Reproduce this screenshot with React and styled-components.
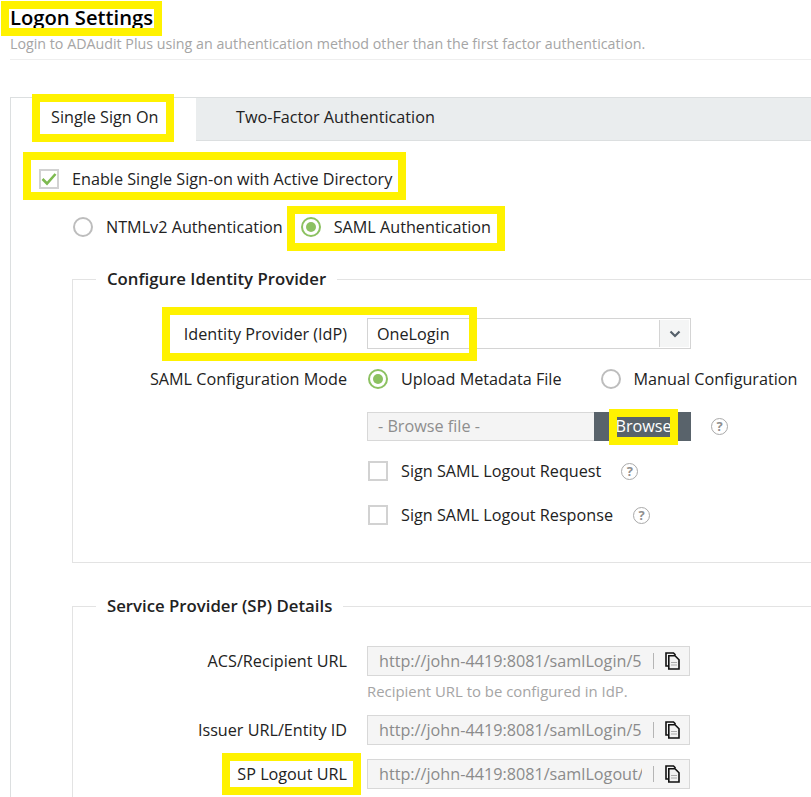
import React from 'react';
import styled, { createGlobalStyle } from 'styled-components';

const GlobalStyle = createGlobalStyle`
  html, body {
    margin: 0;
    padding: 0;
    background: #fff;
  }
  body {
    font-family: "Open Sans", "Liberation Sans", sans-serif;
    font-size: 16.2px;
    color: #222;
  }
`;

const Page = styled.div`
  width: 811px;
  height: 797px;
  overflow: hidden;
  padding: 9px 0 0 10px;
  box-sizing: border-box;
`;

// the yellow annotation frames sit around the content without taking up room
const Marked = styled.span`
  display: inline-flex;
  align-items: center;
  outline: 8px solid #fff200;
  background: ${(p) => p.$bg || 'transparent'};
`;

const Title = styled.h1`
  display: flex;
  margin: 0;
  font-size: 20.2px;
  font-weight: 600;
  line-height: 19px;
  color: #000;
`;

const TitleMark = styled(Marked)`
  width: 145px;
  height: 19px;
  align-items: flex-start;
  margin-left: -1px;
  padding-left: 1px;
  box-sizing: border-box;
  line-height: 16px;
`;

const Subtitle = styled.p`
  margin: 6px 0 0;
  padding-bottom: 5px;
  font-size: 14.25px;
  line-height: 20px;
  color: #a5a5a5;
  border-bottom: 1px solid #eee;
`;

const Panel = styled.div`
  margin-top: 37px;
  border-top: 1px solid #dcdfe0;
  border-left: 1px solid #dcdfe0;
  height: 700px;
`;

const TabBar = styled.div`
  display: flex;
  height: 42px;
  background: #eaedee;
  border-bottom: 1px solid #dcdfe0;
`;

const ActiveTab = styled.div`
  box-sizing: border-box;
  width: 185px;
  height: 43px;
  padding: 4px 0 0 29px;
  background: #fff;
`;

const Tab = styled.div`
  display: flex;
  align-items: center;
  height: 38px;
  padding-left: 40px;
`;

const TabMark = styled(Marked)`
  width: 126px;
  height: 32px;
  padding: 0 0 2px 11px;
  box-sizing: border-box;
  white-space: nowrap;
`;

const Body = styled.div`
  display: flex;
  flex-direction: column;
  align-items: flex-start;
  padding: 19px 0 0 20px;
`;

const EnableMark = styled(Marked)`
  width: 367px;
  height: 32px;
  padding: 6px 0 0 8px;
  box-sizing: border-box;
  gap: 13px;
  white-space: nowrap;
`;

const Box = styled.span`
  flex: none;
  display: inline-flex;
  align-items: center;
  justify-content: center;
  width: 20px;
  height: 20px;
  box-sizing: border-box;
  border: 2px solid #d2d2d2;
  background: #fff;
`;

const RadioRow = styled.div`
  display: flex;
  align-items: center;
  height: 29px;
  margin: 22px 0 0 42px;
`;

const Option = styled.label`
  display: inline-flex;
  align-items: center;
  gap: 13px;
  white-space: nowrap;
  padding-bottom: 3px;
`;

const Circle = styled.span`
  flex: none;
  position: relative;
  width: 20px;
  height: 20px;
  box-sizing: border-box;
  border-radius: 50%;
  border: 2px solid ${(p) => (p.$on ? '#8cc161' : '#bdbdbd')};

  &::after {
    content: '';
    display: ${(p) => (p.$on ? 'block' : 'none')};
    position: absolute;
    inset: 3px;
    border-radius: 50%;
    background: #8cc161;
  }
`;

const SamlMark = styled(Marked)`
  width: 202px;
  height: 29px;
  margin-left: 12px;
  padding-left: 6px;
  box-sizing: border-box;
`;

const Section = styled.section`
  margin-left: 61px;
  height: ${(p) => p.$height};
  margin-top: ${(p) => p.$top};
  width: 800px;
  box-sizing: border-box;
  border: 1px solid #e3e3e3;
`;

const Legend = styled.h2`
  width: max-content;
  margin: -11px 0 0 23px;
  padding: 0 11px;
  background: #fff;
  font-size: 16.75px;
  font-weight: 600;
  line-height: 20px;
  color: #222;
`;

const Row = styled.div`
  position: relative;
  display: grid;
  grid-template-columns: 274px 1fr;
  column-gap: 20px;
  align-items: center;
  min-height: ${(p) => p.$h || '30px'};
  margin-top: ${(p) => p.$top || '0'};
`;

const Label = styled.div`
  display: flex;
  justify-content: flex-end;
  white-space: nowrap;
`;

const Select = styled.div`
  display: flex;
  align-items: center;
  justify-content: space-between;
  width: 324px;
  height: 31px;
  box-sizing: border-box;
  border: 1px solid #d4d4d4;
  padding-left: 9px;
`;

const SelectArrow = styled.span`
  display: flex;
  align-items: center;
  justify-content: center;
  width: 29px;
  height: 27px;
  margin-right: 1px;
  background: #f4f5f5;
  border-left: 1px solid #d4d4d4;
`;

// frame that spans the label and the start of the select next to it
const ProviderFrame = styled.span`
  position: absolute;
  left: 97px;
  top: -3px;
  width: 299px;
  height: 38px;
  outline: 8px solid #fff200;
  pointer-events: none;
`;

const ModeLine = styled.div`
  display: flex;
  align-items: center;
  gap: 39px;
  padding: 3px 0 0 1px;
`;

const FileLine = styled.div`
  display: flex;
  align-items: center;
`;

const FileInput = styled.div`
  display: flex;
  align-items: center;
  width: 227px;
  height: 29px;
  box-sizing: border-box;
  padding: 0 0 2px 10px;
  background: #f4f4f4;
  border: 1px solid #d8d8d8;
  border-right: none;
  color: #8e8e8e;
`;

const BrowseButton = styled.div`
  display: flex;
  align-items: center;
  justify-content: center;
  width: 97px;
  height: 29px;
  padding-left: 2px;
  box-sizing: border-box;
  background: #59636b;
  color: #fff;
`;

const BrowseMark = styled(Marked)`
  width: 53px;
  height: 20px;
  padding-bottom: 2px;
  box-sizing: border-box;
  justify-content: center;
`;

const Help = styled.span`
  flex: none;
  display: inline-flex;
  align-items: center;
  justify-content: center;
  width: 17px;
  height: 17px;
  box-sizing: border-box;
  margin-left: 20px;
  border: 1.5px solid #a9a9a9;
  border-radius: 50%;
  color: #8f8f8f;
  font-size: 13px;
  font-weight: 700;
  line-height: 1;
`;

const CheckLine = styled.div`
  display: flex;
  align-items: center;
  height: 20px;
  margin: ${(p) => p.$top} 0 0 295px;
`;

const CheckText = styled.span`
  margin-left: 13px;
  white-space: nowrap;
`;

const UrlSpacer = styled.div`
  height: 30px;
`;

const UrlBox = styled.div`
  display: flex;
  align-items: center;
  width: 323px;
  height: 30px;
  box-sizing: border-box;
  padding-left: 11px;
  background: #f5f5f5;
  border: 1px solid #d8d8d8;
  color: #8b8b8b;
`;

const UrlText = styled.span`
  width: 263px;
  overflow: hidden;
  white-space: nowrap;
`;

const UrlCopy = styled.span`
  display: flex;
  align-items: center;
  height: 16px;
  margin-left: 11px;
  padding-left: 11px;
  border-left: 1px solid #b5b5b5;
`;

const Hint = styled.div`
  margin: 5px 0 0 294px;
  font-size: 14.9px;
  line-height: 20px;
  color: #a5a5a5;
`;

const SpMark = styled(Marked)`
  height: 26px;
  width: 123px;
  justify-content: flex-end;
  padding-right: 6px;
  box-sizing: border-box;
  margin-right: -6px;
`;

const Check = () => (
  <svg width="16" height="14" viewBox="0 0 16 14" fill="none">
    <path d="M1.5 7 L6 11.5 L14.5 2" stroke="#7dba50" strokeWidth="2.6" />
  </svg>
);

const Chevron = () => (
  <svg width="12" height="8" viewBox="0 0 12 8" fill="none">
    <path d="M1.5 1.5 L6 6 L10.5 1.5" stroke="#55606a" strokeWidth="2.2" />
  </svg>
);

const CopyIcon = () => (
  <svg width="15" height="18" viewBox="0 0 15 18" fill="none">
    <path d="M3 14 H1 V1 H8.5 L10.5 3" stroke="#111" strokeWidth="1.6" />
    <path d="M3.8 3.8 H10 L14 7.8 V17 H3.8 Z" fill="#f2f2f2" stroke="#111" strokeWidth="1.6" />
    <path d="M6 10.5 H12 M6 13 H12" stroke="#aaa" strokeWidth="1" />
  </svg>
);

const urls = [
  { label: 'ACS/Recipient URL', value: 'http://john-4419:8081/samlLogin/5', hint: 'Recipient URL to be configured in IdP.' },
  { label: 'Issuer URL/Entity ID', value: 'http://john-4419:8081/samlLogin/5', top: '14px' },
  { label: 'SP Logout URL', value: 'http://john-4419:8081/samlLogout/', top: '14px', marked: true },
];

const App = () => (
  <Page>
    <GlobalStyle />
    <Title><TitleMark>Logon Settings</TitleMark></Title>
    <Subtitle>Login to ADAudit Plus using an authentication method other than the first factor authentication.</Subtitle>

    <Panel>
      <TabBar>
        <ActiveTab><TabMark $bg="#fff">Single Sign On</TabMark></ActiveTab>
        <Tab>Two-Factor Authentication</Tab>
      </TabBar>

      <Body>
        <EnableMark>
          <Box><Check /></Box>
          Enable Single Sign-on with Active Directory
        </EnableMark>

        <RadioRow>
          <Option><Circle />NTMLv2 Authentication</Option>
          <SamlMark><Option><Circle $on />SAML Authentication</Option></SamlMark>
        </RadioRow>
      </Body>

      <Section $top="36px" $height="284px">
        <Legend>Configure Identity Provider</Legend>
        <Row $top="29px" $h="31px">
          <Label>Identity Provider (IdP)</Label>
          <Select>
            OneLogin
            <SelectArrow><Chevron /></SelectArrow>
          </Select>
          <ProviderFrame />
        </Row>
        <Row $top="15px">
          <Label>SAML Configuration Mode</Label>
          <ModeLine>
            <Option><Circle $on />Upload Metadata File</Option>
            <Option><Circle />Manual Configuration</Option>
          </ModeLine>
        </Row>
        <Row $top="18px" $h="29px">
          <span />
          <FileLine>
            <FileInput>- Browse file -</FileInput>
            <BrowseButton><BrowseMark>Browse</BrowseMark></BrowseButton>
            <Help>?</Help>
          </FileLine>
        </Row>
        <CheckLine $top="20px">
          <Box />
          <CheckText>Sign SAML Logout Request</CheckText>
          <Help>?</Help>
        </CheckLine>
        <CheckLine $top="24px">
          <Box />
          <CheckText>Sign SAML Logout Response</CheckText>
          <Help>?</Help>
        </CheckLine>
      </Section>

      <Section $top="43px" $height="260px">
        <Legend>Service Provider (SP) Details</Legend>
        <UrlSpacer />
        {urls.map((u) => (
          <React.Fragment key={u.label}>
            <Row $top={u.top}>
              <Label>{u.marked ? <SpMark>{u.label}</SpMark> : u.label}</Label>
              <UrlBox>
                <UrlText>{u.value}</UrlText>
                <UrlCopy><CopyIcon /></UrlCopy>
              </UrlBox>
            </Row>
            {u.hint && <Hint>{u.hint}</Hint>}
          </React.Fragment>
        ))}
      </Section>
    </Panel>
  </Page>
);

export default App;
